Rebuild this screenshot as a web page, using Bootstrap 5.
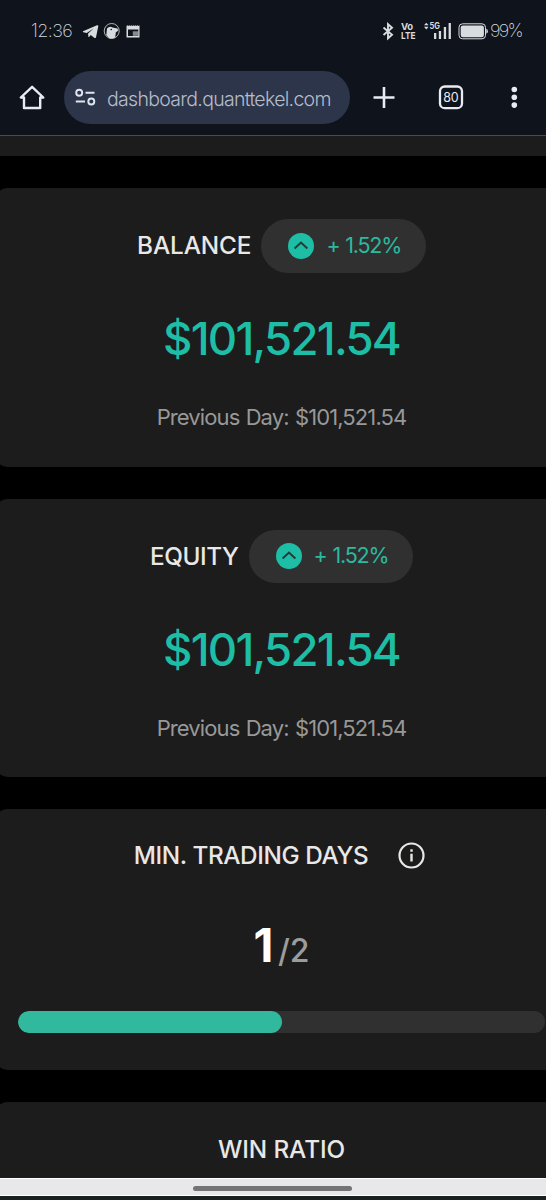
<!DOCTYPE html>
<html lang="en">
<head>
<meta charset="utf-8">
<meta name="viewport" content="width=device-width, initial-scale=1">
<title>Dashboard</title>
<link href="https://cdn.jsdelivr.net/npm/bootstrap@5.3.0/dist/css/bootstrap.min.css" rel="stylesheet">
<style>
body{background:#000;font-family:Inter,"Liberation Sans",sans-serif;height:1200px;overflow:hidden;color:#e9e8e6}
.chrome{background:#0e131c;height:136px;border-bottom:1px solid #4a4b57}
.status{height:62px;padding-left:31px;padding-right:23px;color:#d4d7db}
.clock,.pct{font-size:18px;font-weight:200;line-height:20px;color:#d4d7db;white-space:nowrap}
.clock{width:51px;letter-spacing:-.6px}
.pct{letter-spacing:-1.7px;width:33px;margin-left:1px}
.tools{height:54px;margin-top:8px;padding-left:18px}
.url{background:#2c3549;width:285.5px;height:53px;padding-left:11px;margin-left:17px;color:#b7bccb;font-size:19.5px;font-weight:300;letter-spacing:-.7px;white-space:nowrap}
.url span{padding-top:5px;margin-left:7px}
.strip{height:20px;background:#1c1c1c}
.panel{width:575px;margin-left:-6px;background:#1c1c1c;border-radius:14px;margin-top:32px;height:278.5px;padding-top:31px}
.goal{height:260.5px;padding:30px 24px 0}
.head{font-size:24.3px;font-weight:500;line-height:53px;white-space:nowrap;letter-spacing:-.1px}
.tight{letter-spacing:-.4px}
.pill{background:#303030;color:#2bb99f;height:53.5px;width:164.5px;font-size:21.5px;font-weight:400;letter-spacing:-1.2px;word-spacing:1px;padding-left:27px;gap:12px;margin-left:10px}
.pill span{margin-top:-2px}
.money{color:#1dbda6;font-size:45.5px;font-weight:500;letter-spacing:-1.75px;line-height:56px;margin-top:38.5px}
.prev{color:#989898;font-size:22px;font-weight:400;letter-spacing:-.9px;word-spacing:1px;line-height:30px;margin-top:35px}
.count{line-height:56px;margin-top:46px}
.now{font-size:46px;font-weight:700;color:#fff}
.total{font-size:32px;font-weight:500;color:#9c9c9c}
.bar{height:22px;background:#303030;border-radius:11px;margin-top:27px}
.bar .progress-bar{background:#30b99d;border-radius:11px}
.last{height:76.5px;padding-top:32px}
.sysnav{height:18px;background:#e8e8eb;border-top:1px solid #fff;border-bottom:1px solid #fff}
.grip{width:159px;height:5px;background:#747477;margin:2px 1px 0 0}
.foot{height:4px;background:#1c1f20}
svg{display:block;flex:none}
</style>
</head>
<body>
<header class="chrome">
 <div class="status d-flex align-items-center">
  <span class="clock">12:36</span>
  <svg width="60" height="20" viewBox="82 20 60 20" fill="#d9dcdf">
   <path d="M83 30.200 97 24.200Q98.400 23.900 98.300 25.300L96 36.200Q95.500 37.600 94.200 36.800L90.800 34 89 35.900Q88.300 36.200 88.300 35.300L88.100 32.500 93.600 27.400 86.700 31.900 83.300 31.200Q82.500 30.700 83 30.200Z"/>
   <circle cx="111.700" cy="30" r="7.500" fill="none" stroke="#d9dcdf" stroke-width=".8"/>
   <path d="M107 27.500Q109.500 24.700 112.500 26.500L117.500 27.500 118.200 29.500 115.800 31.500 115.200 36.500Q112 38.400 109 37L106.300 34Z"/><circle cx="111.200" cy="28.500" r=".8" fill="#0e131c"/>
   <path fill-rule="evenodd" d="M126.500 25l1-.8 1 .8 1-.8 1 .8 1-.8 1 .8 1-.8 1 .8 1-.8 1 .8 1-.8 1 .8 1-.8V36.400H126.500ZM128 28.500V35H138.300V28.500Z"/><path d="M132.800 30.300h5.500v4.500h-5.500z" opacity=".6"/>
  </svg>
  <svg class="ms-auto" width="107" height="22" viewBox="382 19 107 22" fill="#d9dcdf" font-family="Inter" font-weight="700">
   <path d="M383.500 26.500 392 33.800 388 37.300V23.200L392 26.700 383.500 34" fill="none" stroke="#d9dcdf" stroke-width="1.900"/>
   <text x="401" y="29" font-size="9.500" textLength="12">Vo</text><text x="401" y="38" font-size="9.500" textLength="14.500" lengthAdjust="spacingAndGlyphs">LTE</text>
   <path d="m424 24.300 2.300-2.600 2.300 2.600zM424 25.800l2.300 2.600 2.300-2.600z"/><text x="429.500" y="28" font-size="8.500" textLength="10.500" lengthAdjust="spacingAndGlyphs">5G</text>
   <path d="M434 32h2.300v6H434zM438.800 30h2.300v8h-2.300zM443.800 26h2.300v12h-2.300zM448.600 22h2.300v16h-2.300z"/>
   <rect x="459" y="22.800" width="26.500" height="15" rx="3.500" fill="none" stroke="#d9dcdf"/><rect x="460.700" y="24.400" width="23.200" height="11.800" rx="2.200"/><path d="M486.300 27.800q1.600.300 1.600 2.400t-1.600 2.400z"/>
  </svg>
  <span class="pct">99%</span>
 </div>
 <div class="tools d-flex align-items-center">
  <svg width="29" height="28" viewBox="18 83.500 29 28" fill="none" stroke="#e8ebf4" stroke-width="2.400" stroke-linejoin="round"><path d="M20.800 98H24V108.500H40.200V98H43.300L32.100 87.300Z"/></svg>
  <div class="url rounded-pill d-flex align-items-center">
   <svg width="21" height="18" viewBox="75 88.500 21 18" fill="none" stroke="#e0e5f2" stroke-width="1.900"><circle cx="79.200" cy="93.300" r="3"/><path d="M85.500 93.300H94.500M75.800 102H85"/><circle cx="91.300" cy="102" r="3"/></svg>
   <span class="ps-1">dashboard.quanttekel.com</span>
  </div>
  <svg class="ms-4" width="146" height="28" viewBox="374 83.500 146 28" overflow="visible" fill="none" stroke="#e8ebf4"><path d="M373.500 98H394.500M384 87.500V108.500" stroke-width="2.600"/><rect x="440" y="87" width="22" height="21.700" rx="4.800" stroke-width="2.300"/><text x="443.200" y="102.400" font-family="Inter" font-size="12.500" font-weight="400" fill="#e8ebf4" stroke="none" textLength="15.500">80</text><g fill="#e8ebf4" stroke="none"><circle cx="514.300" cy="90" r="2.800"/><circle cx="514.300" cy="97.800" r="2.800"/><circle cx="514.300" cy="105.600" r="2.800"/></g></svg>
 </div>
</header>
<div class="strip"></div>
<main>
 <section class="panel text-center">
  <div class="d-flex justify-content-center"><span class="head">BALANCE</span>
   <div class="pill rounded-pill d-flex align-items-center"><svg width="26" height="26" viewBox="0 0 26 26"><circle cx="13" cy="13" r="13" fill="#1dbda6"/><path d="m6.600 15.600 6.400-6 6.400 6" fill="none" stroke="#263c39" stroke-width="2"/></svg><span>+ 1.52%</span></div></div>
  <div class="money">$101,521.54</div>
  <div class="prev">Previous Day: $101,521.54</div>
 </section>
 <section class="panel text-center">
  <div class="d-flex justify-content-center"><span class="head tight">EQUITY</span>
   <div class="pill rounded-pill d-flex align-items-center"><svg width="26" height="26" viewBox="0 0 26 26"><circle cx="13" cy="13" r="13" fill="#1dbda6"/><path d="m6.600 15.600 6.400-6 6.400 6" fill="none" stroke="#263c39" stroke-width="2"/></svg><span>+ 1.52%</span></div></div>
  <div class="money">$101,521.54</div>
  <div class="prev">Previous Day: $101,521.54</div>
 </section>
 <section class="panel goal text-center">
  <div class="head tight d-flex justify-content-center align-items-center pe-1" style="height:32px"><span>MIN. TRADING DAYS</span>
   <svg width="27" height="27" viewBox="0 0 27 27" style="margin-left:30px"><circle cx="13.500" cy="13.500" r="12" fill="none" stroke="#e9e8e6" stroke-width="2.200"/><path d="M12.300 11.800h2.400v7.700h-2.400zM12.300 7.200h2.400v2.600h-2.400z" fill="#e9e8e6"/></svg></div>
  <div class="count"><span class="now">1</span> <span class="total">/2</span></div>
  <div class="progress bar"><div class="progress-bar" style="width:50%"></div></div>
 </section>
 <section class="panel last rounded-bottom-0 text-center"><div class="head lh-sm">WIN RATIO</div></section>
</main>
<div class="sysnav d-flex justify-content-center align-items-center"><div class="grip rounded-pill"></div></div>
<div class="foot"></div>
<script src="https://cdn.jsdelivr.net/npm/bootstrap@5.3.0/dist/js/bootstrap.bundle.min.js"></script>
</body>
</html>
